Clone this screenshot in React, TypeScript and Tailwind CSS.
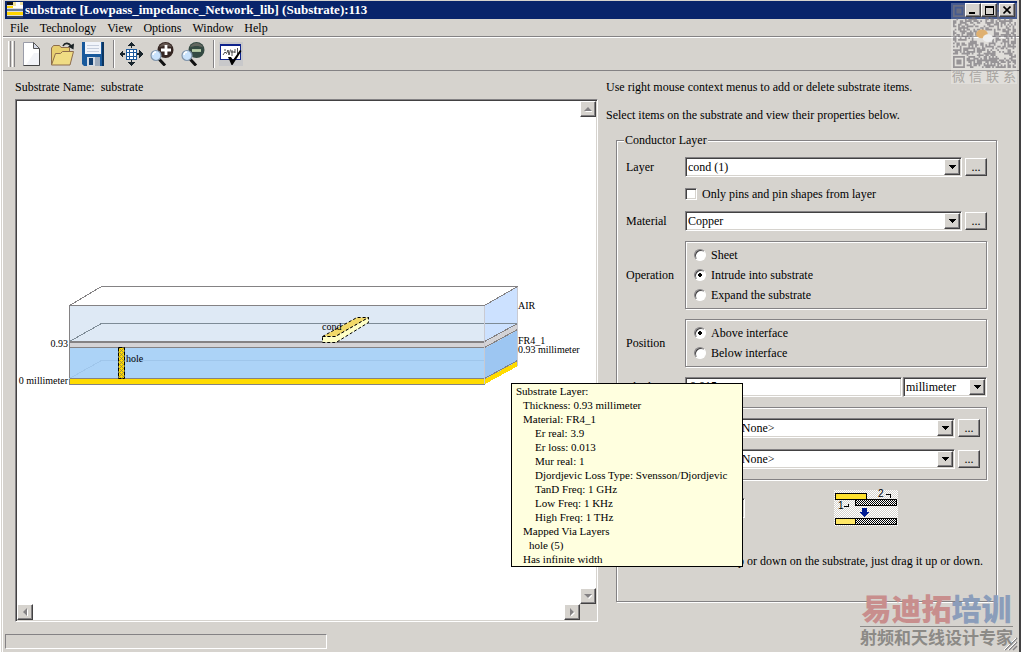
import type { ReactNode } from "react";

const SUNKEN =
  "border border-t-[#848284] border-l-[#848284] border-r-white border-b-white shadow-[inset_1px_1px_0_#424142,inset_-1px_-1px_0_#d6d3ce]";
const RAISED =
  "border border-t-white border-l-white border-r-[#424142] border-b-[#424142] shadow-[inset_-1px_-1px_0_#848284] bg-[#d6d3ce]";
const ETCHED = "border border-[#848284] shadow-[1px_1px_0_#fff,inset_1px_1px_0_#fff]";

const TOOLTIP_LINES: { text: string; indent: string }[] = [
  { text: "Substrate Layer:", indent: "pl-1" },
  { text: "Thickness: 0.93 millimeter", indent: "pl-[11px]" },
  { text: "Material: FR4_1", indent: "pl-[11px]" },
  { text: "Er real: 3.9", indent: "pl-[23px]" },
  { text: "Er loss: 0.013", indent: "pl-[23px]" },
  { text: "Mur real: 1", indent: "pl-[23px]" },
  { text: "Djordjevic Loss Type: Svensson/Djordjevic", indent: "pl-[23px]" },
  { text: "TanD Freq: 1 GHz", indent: "pl-[23px]" },
  { text: "Low Freq: 1 KHz", indent: "pl-[23px]" },
  { text: "High Freq: 1 THz", indent: "pl-[23px]" },
  { text: "Mapped Via Layers", indent: "pl-[11px]" },
  { text: "hole (5)", indent: "pl-[17px]" },
  { text: "Has infinite width", indent: "pl-[11px]" },
];

function AppIcon() {
  return (
    <svg width="16" height="16" viewBox="0 0 16 16" shapeRendering="crispEdges" aria-hidden="true">
      <rect width="16" height="16" fill="#dcdcdc" />
      <rect width="6" height="3" fill="#111" />
      <path d="M6 0h10v6H6z" fill="#fff" />
      <path d="M6 0h3v4H6zM13 0h3v3h-3z" fill="#f1e2a0" />
      <rect y="4" width="6" height="2" fill="#ffd500" />
      <rect y="7" width="16" height="2" fill="#667a99" />
      <rect y="10" width="16" height="3" fill="#ffd500" />
      <rect y="14" width="16" height="2" fill="#33425c" />
    </svg>
  );
}

function NewIcon() {
  return (
    <svg width="24" height="24" viewBox="0 0 24 24" aria-hidden="true">
      <path d="M4.500.5h10l6 6v17h-16z" fill="#fff" stroke="#9a9ca8" />
      <path d="M20.500 6.500v17h-16" fill="none" stroke="#444" />
      <path d="M14.500.5v6h6z" fill="#d7dbe8" stroke="#555" />
      <path d="M15 11h5v12H7z" fill="#eceef4" opacity=".7" />
    </svg>
  );
}

function OpenIcon() {
  return (
    <svg width="24" height="24" viewBox="0 0 24 24" aria-hidden="true">
      <path d="M1.500 22.500V6l2-2.500h6l1.500 2h8.500V10" fill="#e8cf70" stroke="#8d6c4c" />
      <path d="M1.500 23l4-11.500h5l2-2h11L20 23z" fill="#f0dc84" stroke="#8d6c4c" />
      <path d="M13 4c2-4 6-3 8 0" fill="none" stroke="#1b2326" strokeWidth="1.600" />
      <path d="M18 4.500l6-3-.5 6z" fill="#1b2326" />
    </svg>
  );
}

function SaveIcon() {
  return (
    <svg width="24" height="24" viewBox="0 0 24 24" aria-hidden="true">
      <path d="M1 0h22v24H3l-2-2z" fill="#18599c" />
      <path d="M21 0h2v24h-2z" fill="#0c3560" />
      <rect x="4" y="0" width="16" height="12" fill="#f1f4fa" />
      <path d="M6 3.500h12M6 6.500h12M6 9.500h12" stroke="#c5cddc" />
      <rect x="6" y="15" width="13" height="9" fill="#d4dbe4" />
      <rect x="8" y="16" width="4" height="7" fill="#103e70" />
      <rect x="14" y="15" width="5" height="9" fill="#9caabb" />
    </svg>
  );
}

function FitIcon() {
  return (
    <svg width="24" height="24" viewBox="0 0 24 24" shapeRendering="crispEdges" aria-hidden="true">
      <rect x="7" y="7" width="11" height="11" fill="#fff" />
      <path
        d="M7.500 7v11M10.500 7v11M14.500 7v11M17.500 7v11M7 7.500h11M7 10.500h11M7 14.500h11M7 17.500h11"
        stroke="#1b5a9e"
        fill="none"
      />
      <path
        d="M12 0l4 4h-3v2h-1V4H9zM12 24l4-4h-3v-2h-1v2H9zM0 12l4-4v3h2v2H4v3zM24 12l-4-4v3h-2v2h2v3z"
        fill="#18242c"
      />
    </svg>
  );
}

function ZoomIcon({ kind }: { kind: "in" | "out" }) {
  const dark = kind === "in" ? "#352622" : "#344a43";
  return (
    <svg width="24" height="24" viewBox="0 0 24 24" aria-hidden="true">
      <circle cx="15.500" cy="8" r="8" fill={dark} />
      <path d="M9 5.500c2-6 11-6 13 0-4-2-9-2-13 0z" fill="#8a8079" opacity=".55" />
      <path d="M9 17l6 6.500" stroke="#101010" strokeWidth="3" />
      <circle cx="6" cy="13.500" r="5" fill="#c9e2fb" stroke="#8296ab" strokeWidth="1.200" />
      <path d="M3 13c0-2 1.500-3 3-3" stroke="#fff" strokeWidth="1.500" fill="none" />
      <path
        d={kind === "in" ? "M11 8h10M16 3v10" : "M11 8.500h9"}
        stroke={kind === "in" ? "#fff" : "#b8cda8"}
        strokeWidth="2.800"
      />
    </svg>
  );
}

function CheckIcon() {
  return (
    <svg width="24" height="24" viewBox="0 0 24 24" aria-hidden="true">
      <rect x="1.500" y="2.500" width="20" height="15" fill="#fff" stroke="#10248c" />
      <path d="M1 3h21" stroke="#10248c" strokeWidth="2" />
      <path
        d="M4 13l2-3 1.500 1.500L9 8l1 5 1.500-5.500M13 14V8M12 10h4M16 7v4M18.500 6v6M5 8h2"
        stroke="#222"
        fill="none"
        strokeWidth=".8"
      />
      <path d="M9 15h3l2 3 7-10 1.500 1-9 14h-1z" fill="#000" />
    </svg>
  );
}

function ToolButton({ label, children, lit }: { label: string; children: ReactNode; lit?: boolean }) {
  return (
    <button type="button" aria-label={label} className={lit ? "size-6 bg-[#c8c8ca]" : "size-6"}>
      {children}
    </button>
  );
}

function Separator() {
  return <span className="h-7 w-[2px] border-l border-l-[#848284] bg-white" />;
}

function ArrowDown() {
  return (
    <svg width="7" height="4" viewBox="0 0 7 4" shapeRendering="crispEdges" aria-hidden="true">
      <path d="M0 0h7L3.500 4z" fill="#000" />
    </svg>
  );
}

function Combo({ label, value, className }: { label: string; value: string; className: string }) {
  return (
    <label className={`flex h-5 items-stretch bg-white p-[2px] ${SUNKEN} ${className}`}>
      <select aria-label={label} defaultValue={value} className="min-w-0 flex-1 appearance-none bg-transparent outline-none">
        <option>{value}</option>
      </select>
      <span className={`-my-px -mr-px flex w-4 items-center justify-center ${RAISED}`}>
        <ArrowDown />
      </span>
    </label>
  );
}

function MoreButton({ label }: { label: string }) {
  return (
    <button type="button" aria-label={label} className={`ml-[3px] h-[18px] w-[22px] leading-3 ${RAISED}`}>
      ...
    </button>
  );
}

function Radio({ name, text, checked }: { name: string; text: string; checked?: boolean }) {
  return (
    <label className="flex h-5 items-center gap-[5px]">
      <input
        type="radio"
        name={name}
        defaultChecked={checked}
        className="m-0 size-3 appearance-none rounded-full border border-t-[#848284] border-l-[#848284] border-r-white border-b-white bg-white shadow-[inset_1px_1px_0_#424142] checked:bg-[radial-gradient(circle,#000_2px,#fff_2px)]"
      />
      <span>{text}</span>
    </label>
  );
}

function ScrollButton({ label, d }: { label: string; d: string }) {
  return (
    <button type="button" aria-label={label} className={`flex size-4 items-center justify-center ${RAISED}`}>
      <svg width="8" height="8" viewBox="0 0 8 8" aria-hidden="true">
        <path d={d} fill="#fff" transform="translate(1 1)" />
        <path d={d} fill="#848284" />
      </svg>
    </button>
  );
}

function SubstrateDrawing() {
  return (
    <svg
      width="562"
      height="106"
      viewBox="17 283 562 106"
      role="img"
      aria-label="Substrate stack"
      className="max-w-full overflow-visible font-['Liberation_Serif',serif] text-[10px]"
    >
      <defs>
        <pattern id="hatch" width="4" height="4" patternUnits="userSpaceOnUse">
          <rect width="4" height="4" fill="#ffdb00" />
          <path d="M0 4l4-4M0 1l3 3" stroke="#8d8350" strokeWidth=".8" />
        </pattern>
      </defs>
      <g shapeRendering="crispEdges">
        <rect x="69" y="305" width="416" height="37" fill="#dee9f5" />
        <rect x="69" y="343" width="416" height="4" fill="#d4d3d6" />
        <rect x="69" y="348" width="416" height="30" fill="#acd3f7" />
        <rect x="69" y="379" width="416" height="5" fill="#ffdb00" />
        <path d="M485 305l33-18v37l-33 18z" fill="#cce1ff" />
        <path d="M485 342l33-18v6l-33 18z" fill="#d4d3d6" />
        <path d="M485 348l33-18v31l-33 18z" fill="#9dc6f2" />
        <path d="M485 379l33-18v5l-33 18z" fill="#ffdb00" />
      </g>
      <g fill="none" stroke="#848284" shapeRendering="crispEdges">
        <path d="M69.500 384V305.500L101.500 286.500H517.500L484.500 305.500H69.500" />
        <path d="M69 341.500H484.500L517.500 323.500M69 347.500H484.500L517.500 329.500M69 378.500H484.500L517.500 360.500M69 384.500H485" />
        <path d="M69 342.500H485" />
        <path d="M69.500 341.500L101.500 323.500H517" stroke="#7d8b96" />
        <path d="M69.500 378.500L101.500 360.500H485" stroke="#9fc6eb" />
        <path d="M484.500 306V384M517.500 287V366" stroke="#c9cad2" />
      </g>
      <path d="M322.500 336.500L357 317.500h12L335.500 336.500z" fill="#f2d968" stroke="#000" strokeDasharray="3 2" />
      <path
        d="M322.500 336.500h13L368.500 317.500v5L336 342.500h-13.500z"
        fill="#ffffc6"
        stroke="#000"
        strokeDasharray="3 2"
      />
      <rect x="118.500" y="347.500" width="6" height="31" fill="url(#hatch)" stroke="#000" strokeDasharray="4 1" />
      <g fill="#000">
        <text x="68" y="347" textAnchor="end">0.93</text>
        <text x="68" y="384" textAnchor="end">0 millimeter</text>
        <text x="126" y="362">hole</text>
        <text x="322" y="330">cond</text>
        <text x="518" y="309">AIR</text>
        <text x="518" y="344">FR4_1</text>
        <text x="518" y="353">0.93 millimeter</text>
      </g>
    </svg>
  );
}

function PrecedenceDrawing() {
  return (
    <svg
      width="64"
      height="36"
      viewBox="0 0 64 36"
      shapeRendering="crispEdges"
      className="overflow-visible font-['Liberation_Sans',sans-serif] text-[10px]"
      aria-hidden="true"
    >
      <defs>
        <pattern id="dots-light" width="2" height="2" patternUnits="userSpaceOnUse">
          <rect width="2" height="2" fill="#d6d3ce" />
          <path d="M0 0h1v1H0zM1 1h1v1H1z" fill="#fff" />
        </pattern>
        <pattern id="dots-dark" width="2" height="2" patternUnits="userSpaceOnUse">
          <rect width="2" height="2" fill="#fff" />
          <path d="M0 0h1v1H0zM1 1h1v1H1z" fill="#000" />
        </pattern>
      </defs>
      <rect width="64" height="36" fill="url(#dots-light)" />
      <rect x="1.500" y="3.500" width="31" height="6" fill="#ffe22e" stroke="#000" />
      <rect x="21.500" y="9.500" width="41" height="6" fill="url(#dots-dark)" stroke="#000" />
      <rect x="1.500" y="28.500" width="20" height="6" fill="#ffe766" stroke="#000" />
      <rect x="21.500" y="28.500" width="41" height="6" fill="url(#dots-dark)" stroke="#000" />
      <path d="M28 18h5v4h3l-5.500 5-5.500-5h3z" fill="#001c94" />
      <path d="M10 16.500h4v-3M52 4.500h4v3" stroke="#000" fill="none" />
      <text x="4" y="19">1</text>
      <text x="44" y="7">2</text>
    </svg>
  );
}

const QR_SIZE = 37;

function qrCells(): string {
  let seed = 20231;
  let d = "";
  for (let y = 0; y < QR_SIZE; y++) {
    for (let x = 0; x < QR_SIZE; x++) {
      seed = (seed * 1103515245 + 12345) % 2147483648;
      const finder = (x < 8 && y < 8) || (x > 28 && y < 8) || (x < 8 && y > 28);
      const logo = x > 13 && x < 23 && y > 14 && y < 22;
      if (!finder && !logo && seed / 2147483648 > 0.45) d += `M${x} ${y}h1v1h-1z`;
    }
  }
  for (const [x, y] of [[0, 0], [30, 0], [0, 30]]) {
    d += `M${x} ${y}h7v7h-7zM${x + 1} ${y + 1}v5h5v-5zM${x + 2} ${y + 2}h3v3h-3z`;
  }
  return d;
}

function QrMark() {
  return (
    <div className="pointer-events-none absolute top-[3px] right-1 flex h-[81px] w-[66px] flex-col items-center bg-white/25 pt-[2px] text-[#a9a6a2]">
      <svg width="63" height="63" viewBox="0 0 37 37" aria-hidden="true">
        <path d={qrCells()} fill="#77757a" opacity=".7" />
        <ellipse cx="17" cy="17" rx="3.400" ry="2.600" fill="#dfb070" />
        <ellipse cx="20.500" cy="19.500" rx="3" ry="2.300" fill="#eee" />
      </svg>
      <div className="flex w-full justify-between px-px font-['Noto_Sans_CJK_SC',sans-serif] text-[13px] leading-4">
        {["微", "信", "联", "系"].map((c) => (
          <span key={c}>{c}</span>
        ))}
      </div>
    </div>
  );
}

function BrandMark() {
  return (
    <div className="pointer-events-none absolute right-2 bottom-[6px] flex flex-col items-center font-['Noto_Sans_CJK_SC',sans-serif] font-bold whitespace-nowrap">
      <span className="pb-[3px] text-[30px] leading-[32px] font-black text-[#c88e8d]">
        易迪拓<span className="text-[#8b9dba]">培训</span>
      </span>
      <span className="h-px w-full bg-[#8c8a88]" />
      <span className="text-[17px] leading-[19px] text-[#8c8a86]">射频和天线设计专家</span>
    </div>
  );
}

export default function App() {
  return (
    <div className="relative flex min-h-screen bg-[#d6d3ce] font-['Liberation_Serif','Noto_Sans_CJK_SC',serif] text-[12px] leading-[14px] text-black">
      <div className="w-[3px] border-x border-white bg-[#d6d3ce]" />
      <div className="flex min-w-0 flex-1 flex-col border-r-2 border-[#424142] pt-px">
        <header className="mr-[2px] ml-[2px] flex h-[18px] items-center bg-[#08246b] px-[2px] text-[13px] font-bold text-white">
          <AppIcon />
          <h1 className="ml-[2px] flex-1">substrate [Lowpass_impedance_Network_lib] (Substrate):113</h1>
          <div className="relative z-10 flex text-black">
            <button type="button" aria-label="Minimize" className={`flex h-[14px] w-4 items-end px-[3px] pb-[2px] ${RAISED}`}>
              <span className="h-[2px] w-[6px] bg-black" />
            </button>
            <button type="button" aria-label="Maximize" className={`flex h-[14px] w-4 items-center justify-center ${RAISED}`}>
              <span className="h-[9px] w-[9px] border border-t-2 border-black" />
            </button>
            <button type="button" aria-label="Close" className={`ml-[2px] flex h-[14px] w-4 items-center justify-center ${RAISED}`}>
              <svg width="8" height="8" viewBox="0 0 8 8" aria-hidden="true">
                <path d="M.5.5l7 7M7.500.5l-7 7" stroke="#000" strokeWidth="1.600" />
              </svg>
            </button>
          </div>
        </header>

        <nav className="flex h-[18px] items-center gap-[11px] border-b border-[#848284] pl-[7px]">
          {["File", "Technology", "View", "Options", "Window", "Help"].map((item) => (
            <button key={item} type="button">{item}</button>
          ))}
        </nav>

        <div className="flex h-[34px] items-center border-t border-t-white border-b border-b-[#848284] pl-[5px]">
          <span className="flex h-[26px] gap-px">
            <span className="w-[3px] border-l border-white border-r border-r-[#848284]" />
            <span className="w-[3px] border-l border-white border-r border-r-[#848284]" />
          </span>
          <div className="ml-1 flex items-center gap-[7px]">
            <ToolButton label="New"><NewIcon /></ToolButton>
            <ToolButton label="Open"><OpenIcon /></ToolButton>
            <ToolButton label="Save"><SaveIcon /></ToolButton>
          </div>
          <div className="mr-1 ml-2 flex"><Separator /></div>
          <div className="flex items-center gap-[7px]">
            <ToolButton label="View all"><FitIcon /></ToolButton>
            <ToolButton label="Zoom in"><ZoomIcon kind="in" /></ToolButton>
            <ToolButton label="Zoom out"><ZoomIcon kind="out" /></ToolButton>
          </div>
          <div className="mr-1 ml-2 flex"><Separator /></div>
          <ToolButton label="Check substrate" lit><CheckIcon /></ToolButton>
        </div>

        <main className="flex flex-1 gap-2 pr-[22px] pb-3 pl-3">
          <section className="relative flex min-w-0 flex-1 flex-col">
            <div className="flex h-7 items-center gap-[6px] pt-1">
              <span>Substrate Name:</span>
              <span>substrate</span>
            </div>
            <div className={`grid flex-1 grid-cols-[minmax(0,1fr)_16px] grid-rows-[minmax(0,1fr)_16px] bg-white p-px ${SUNKEN}`}>
              <div className="pt-[182px]">
                <SubstrateDrawing />
              </div>
              <div className="flex flex-col justify-between">
                <ScrollButton label="Scroll up" d="M0 6h8L4 2z" />
                <ScrollButton label="Scroll down" d="M0 2h8L4 6z" />
              </div>
              <div className="flex justify-between">
                <ScrollButton label="Scroll left" d="M6 0v8L2 4z" />
                <ScrollButton label="Scroll right" d="M2 0v8l4-4z" />
              </div>
              <div className="bg-[#d6d3ce]" />
            </div>
            <div
              role="tooltip"
              className="absolute top-[312px] left-[496px] z-10 w-[232px] border border-black bg-[#ffffdf] text-[11px] leading-[14px]"
            >
              {TOOLTIP_LINES.map((line) => (
                <p key={line.text} className={`whitespace-nowrap ${line.indent}`}>{line.text}</p>
              ))}
            </div>
          </section>

          <section className="flex w-[391px] flex-col pt-[2px]">
            <p className="leading-7">Use right mouse context menus to add or delete substrate items.</p>
            <p className="leading-7">Select items on the substrate and view their properties below.</p>
            <fieldset className={`mt-1 mb-5 ml-[10px] flex-1 px-[9px] ${ETCHED}`}>
              <legend className="-ml-[2px] bg-[#d6d3ce] px-px">Conductor Layer</legend>
              <div className="grid grid-cols-[59px_minmax(0,1fr)] items-center gap-y-[10px] pt-[10px]">
                <span>Layer</span>
                <div className="flex items-center">
                  <Combo label="Layer" value="cond (1)" className="flex-1" />
                  <MoreButton label="Edit layer" />
                </div>
                <label className="col-start-2 flex h-[14px] items-center gap-[5px]">
                  <input type="checkbox" className={`m-0 size-3 appearance-none bg-white ${SUNKEN}`} />
                  <span>Only pins and pin shapes from layer</span>
                </label>
                <span>Material</span>
                <div className="flex items-center">
                  <Combo label="Material" value="Copper" className="flex-1" />
                  <MoreButton label="Edit material" />
                </div>
                <span>Operation</span>
                <div role="radiogroup" aria-label="Operation" className={`px-2 py-[3px] ${ETCHED}`}>
                  <Radio name="operation" text="Sheet" />
                  <Radio name="operation" text="Intrude into substrate" checked />
                  <Radio name="operation" text="Expand the substrate" />
                </div>
                <span>Position</span>
                <div role="radiogroup" aria-label="Position" className={`px-2 py-[3px] ${ETCHED}`}>
                  <Radio name="position" text="Above interface" checked />
                  <Radio name="position" text="Below interface" />
                </div>
                <label htmlFor="thickness">Thickness</label>
                <div className="flex gap-px">
                  <input id="thickness" defaultValue="0.015" className={`h-5 min-w-0 flex-1 bg-white pb-[2px] pl-1 outline-none ${SUNKEN}`} />
                  <Combo label="Thickness unit" value="millimeter" className="w-[84px]" />
                </div>
                <span>Roughness</span>
                <div className={`flex flex-col gap-[11px] py-[10px] pr-[6px] pl-2 ${ETCHED}`}>
                  {["Top", "Bottom"].map((side) => (
                    <div key={side} className="flex items-center">
                      <span className="w-[38px]">{side}</span>
                      <Combo label={`${side} roughness`} value="<None>" className="flex-1" />
                      <MoreButton label={`Edit ${side.toLowerCase()} roughness`} />
                    </div>
                  ))}
                </div>
                <label htmlFor="precedence">Precedence</label>
                <div className="flex items-center">
                  <input id="precedence" defaultValue="0" className={`h-5 w-[60px] bg-white pl-1 outline-none ${SUNKEN}`} />
                  <span className="ml-[89px]"><PrecedenceDrawing /></span>
                </div>
              </div>
              <p className="pt-7 pr-1 text-right whitespace-nowrap">
                To move this item up or down on the substrate, just drag it up or down.
              </p>
            </fieldset>
          </section>
        </main>

        <footer className="px-[2px] pb-[3px]">
          <div role="status" className="h-[15px] w-[322px] border border-t-[#848284] border-l-[#848284] border-r-white border-b-white" />
        </footer>
      </div>
      <svg width="14" height="14" viewBox="0 0 14 14" className="absolute right-[3px] bottom-px" aria-hidden="true">
        <path d="M1 13L13 1M5 13l8-8M9 13l4-4" stroke="#848284" strokeWidth="1.500" />
        <path d="M0 13L12 1M4 13l8-8" stroke="#fff" />
      </svg>
      <QrMark />
      <BrandMark />
    </div>
  );
}
